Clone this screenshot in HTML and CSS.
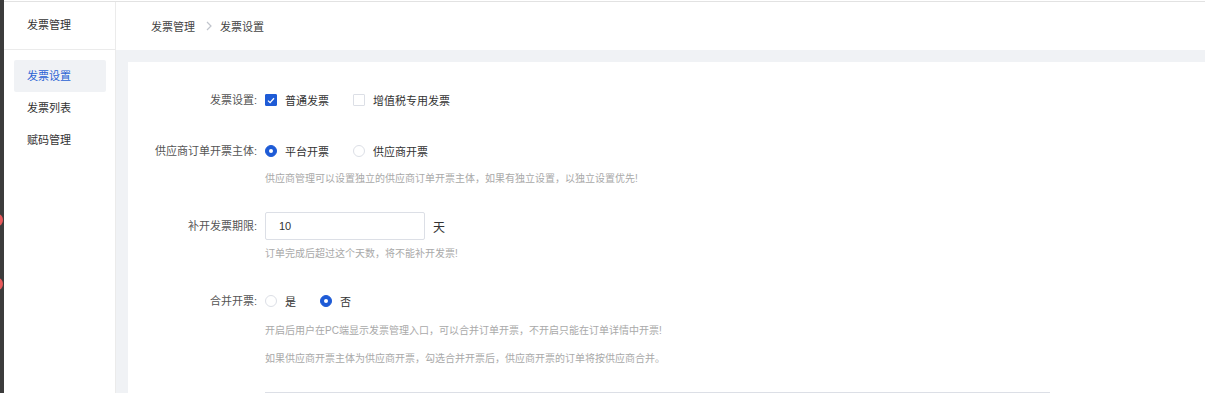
FILE: index.html
```html
<!DOCTYPE html>
<html lang="zh-CN">
<head>
<meta charset="utf-8">
<title>发票设置</title>
<link rel="stylesheet" href="styles.css">
</head>
<body>
<div class="rail">
  <span class="rail-dot rail-dot-first"></span>
  <span class="rail-dot rail-dot-second"></span>
</div>
<div class="app">
  <aside class="sidebar">
    <div class="sidebar-title">发票管理</div>
    <nav class="menu">
      <div class="menu-item active">发票设置</div>
      <div class="menu-item">发票列表</div>
      <div class="menu-item">赋码管理</div>
    </nav>
  </aside>
  <main class="main">
    <header class="topbar">
      <span class="crumb">发票管理</span>
      <svg class="crumb-sep" width="6" height="10" viewBox="0 0 6 10"><path d="M1 1 L5 5 L1 9" fill="none" stroke="#c0c4cc" stroke-width="1.2"/></svg>
      <span class="crumb">发票设置</span>
    </header>
    <div class="body">
      <section class="card">
        <div class="form-item">
          <div class="label">发票设置:</div>
          <div class="content">
            <div class="controls">
              <span class="option">
                <span class="checkbox checked"><svg width="8" height="7" viewBox="0 0 8 7"><path d="M1 3.6 L3.1 5.6 L7 1.2" fill="none" stroke="#fff" stroke-width="1.3"/></svg></span>
                <span class="option-text">普通发票</span>
              </span>
              <span class="option">
                <span class="checkbox"></span>
                <span class="option-text">增值税专用发票</span>
              </span>
            </div>
          </div>
        </div>

        <div class="form-item">
          <div class="label">供应商订单开票主体:</div>
          <div class="content">
            <div class="controls">
              <span class="option">
                <span class="radio checked"></span>
                <span class="option-text">平台开票</span>
              </span>
              <span class="option">
                <span class="radio"></span>
                <span class="option-text">供应商开票</span>
              </span>
            </div>
            <div class="help">供应商管理可以设置独立的供应商订单开票主体，如果有独立设置，以独立设置优先!</div>
          </div>
        </div>

        <div class="form-item">
          <div class="label">补开发票期限:</div>
          <div class="content">
            <div class="controls">
              <div class="input">10</div>
              <span class="unit">天</span>
            </div>
            <div class="help">订单完成后超过这个天数，将不能补开发票!</div>
          </div>
        </div>

        <div class="form-item">
          <div class="label">合并开票:</div>
          <div class="content">
            <div class="controls">
              <span class="option">
                <span class="radio"></span>
                <span class="option-text">是</span>
              </span>
              <span class="option">
                <span class="radio checked"></span>
                <span class="option-text">否</span>
              </span>
            </div>
            <div class="help help-loose">开启后用户在PC端显示发票管理入口，可以合并订单开票，不开启只能在订单详情中开票!</div>
            <div class="help help-looser">如果供应商开票主体为供应商开票，勾选合并开票后，供应商开票的订单将按供应商合并。</div>
          </div>
        </div>

        <div class="next-field"></div>
      </section>
    </div>
  </main>
</div>
</body>
</html>
```

FILE: styles.css
```css
* { box-sizing: border-box; }

html, body {
  margin: 0;
  padding: 0;
  height: 100%;
}

body {
  display: flex;
  font-family: "Liberation Sans", "Noto Sans CJK SC", sans-serif;
  color: #333;
  background: #fff;
  overflow: hidden;
}

.rail {
  width: 4px;
  flex: none;
  background: #3c3c3c;
  display: flex;
  flex-direction: column;
  overflow: hidden;
}

.rail-dot {
  display: block;
  width: 10px;
  height: 12px;
  border-radius: 50%;
  background: #e8595b;
  margin-left: -7px;
  flex: none;
}

.rail-dot-first { margin-top: 214px; }
.rail-dot-second { margin-top: 52px; }

.app {
  flex: 1;
  display: flex;
  margin-top: 1px;
  border-top: 1px solid #e2e2e2;
  min-width: 0;
}

.sidebar {
  width: 112px;
  flex: none;
  border-right: 1px solid #ebebeb;
  background: #fff;
}

.sidebar-title {
  height: 48px;
  border-bottom: 1px solid #ebebeb;
  padding-left: 23px;
  font-size: 11px;
  line-height: 47px;
  color: #333;
}

.menu {
  padding: 10px 9px 0 10px;
}

.menu-item {
  height: 32px;
  line-height: 32px;
  padding-left: 13px;
  font-size: 11px;
  color: #333;
  border-radius: 2px;
}

.menu-item.active {
  background: #f0f2f5;
  color: #2b63d4;
}

.main {
  flex: 1;
  display: flex;
  flex-direction: column;
  min-width: 0;
}

.topbar {
  height: 48px;
  flex: none;
  display: flex;
  align-items: center;
  padding-left: 35px;
  background: #fff;
}

.crumb {
  font-size: 11px;
  color: #444;
}

.crumb-sep {
  margin: 0 8px 0 11px;
}

.body {
  flex: 1;
  background: #f0f2f5;
  padding: 12px 0 0 12px;
}

.card {
  height: 100%;
  background: #fff;
  padding-top: 24px;
}

.form-item {
  display: flex;
  margin-bottom: 23px;
}

.label {
  width: 137px;
  flex: none;
  padding-right: 8px;
  text-align: right;
  font-size: 11px;
  line-height: 28px;
  color: #555;
}

.content {
  flex: 1;
}

.controls {
  display: flex;
  align-items: center;
  height: 28px;
}

.option {
  display: flex;
  align-items: center;
  margin-right: 24px;
}

.option-text {
  font-size: 11px;
  color: #333;
}

.checkbox {
  width: 12px;
  height: 12px;
  border: 1px solid #dcdfe6;
  border-radius: 1px;
  margin-right: 8px;
  display: flex;
  align-items: center;
  justify-content: center;
  background: #fff;
}

.checkbox.checked {
  background: #1e5bd6;
  border-color: #1e5bd6;
}

.radio {
  width: 12px;
  height: 12px;
  border: 1px solid #dcdfe6;
  border-radius: 50%;
  margin-right: 8px;
  background: #fff;
  display: flex;
  align-items: center;
  justify-content: center;
}

.radio.checked {
  background: #1e5bd6;
  border-color: #1e5bd6;
}

.radio.checked::after {
  content: "";
  width: 4px;
  height: 4px;
  border-radius: 50%;
  background: #fff;
}

.input {
  width: 160px;
  height: 28px;
  border: 1px solid #dcdfe6;
  border-radius: 2px;
  padding-left: 13px;
  font-size: 11px;
  line-height: 26px;
  color: #333;
}

.unit {
  margin-left: 8px;
  font-size: 12px;
  color: #333;
}

.help {
  margin-top: 4px;
  font-size: 10px;
  line-height: 20px;
  color: #a9a9a9;
  white-space: nowrap;
}

.help-loose { margin-top: 6px; }
.help-looser { margin-top: 8px; }

.next-field {
  margin-left: 137px;
  width: 785px;
  border-top: 1px solid #dcdfe6;
}
```
